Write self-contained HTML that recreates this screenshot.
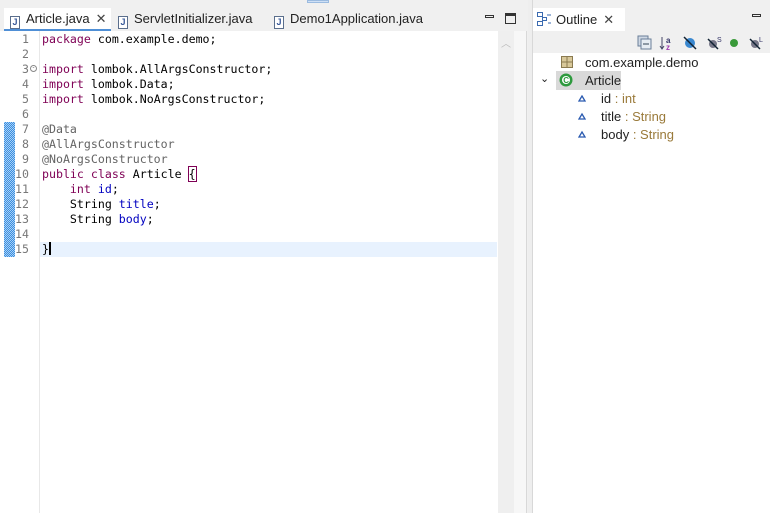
<!DOCTYPE html>
<html><head><meta charset="utf-8"><style>
*{margin:0;padding:0;box-sizing:border-box}
body{width:770px;height:513px;overflow:hidden;background:#f0f0f0;font-family:"Liberation Sans",sans-serif;position:relative}
.abs{position:absolute}
.tab{position:absolute;top:8px;height:23px;font-size:13px;color:#222;line-height:22px;white-space:nowrap}
.jic{display:inline-block;width:10px;height:13px;border:1px solid #5a6e8c;background:#fff;vertical-align:-2px;margin-right:6px;font:bold 9px "Liberation Sans";color:#3a5a9a;text-align:center;line-height:11px}
.code{position:absolute;left:0;top:31px;width:498px;height:482px;background:#fff}
.ln{position:absolute;left:6px;width:23px;font:11.6px "DejaVu Sans Mono",monospace;color:#787878;line-height:15px}
.cl{position:absolute;left:42px;font:11.6px "DejaVu Sans Mono",monospace;color:#000;white-space:pre;line-height:15px}
.k{color:#7f0055}.a{color:#646464}.f{color:#0000c0}
.ot{position:absolute;font-size:13px;color:#222;white-space:nowrap}
.ty{color:#9a7a3a}
.x{font-size:13px;color:#444;margin-left:6px}
</style></head><body>
<div class="abs" style="left:307px;top:0;width:22px;height:3px;background:#cfe0f5;border:1px solid #9bbbe0"></div>
<div class="abs" style="left:0;top:8px;width:528px;height:23px;background:#f0f0f0"></div>
<div class="abs" style="left:4px;top:8px;width:107px;height:23px;background:#fff"></div>
<div class="abs" style="left:4px;top:29px;width:107px;height:2px;background:#4f8fd6"></div>
<div class="tab" style="left:10px"><span class="jic">J</span>Article.java<span class="x">✕</span></div>
<div class="tab" style="left:118px"><span class="jic">J</span>ServletInitializer.java</div>
<div class="tab" style="left:274px"><span class="jic">J</span>Demo1Application.java</div>
<div class="abs" style="left:485px;top:15px;width:9px;height:3px;border:1px solid #333"></div>
<div class="abs" style="left:505px;top:13px;width:11px;height:11px;border:1px solid #333;border-top-width:3px"></div>
<div class="code">
<div class="abs" style="left:4px;top:91px;width:11px;height:135px;background:repeating-conic-gradient(#3a8ee0 0 25%,#a8d0f5 0 50%) 0 0/2px 2px"></div>
<div class="abs" style="left:39px;top:0;width:1px;height:482px;background:#e8e8e8"></div>
<div class="abs" style="left:40px;top:211px;width:457px;height:15px;background:#e8f2fe"></div>
<div class="abs" style="left:498px;top:0;width:16px;height:482px;background:#efefef"></div>
<div class="abs" style="left:501px;top:4px;font-size:10px;color:#bbb">︿</div>
</div>
<div class="abs" style="left:514px;top:31px;width:13px;height:482px;background:#f7f7f7;border-right:1px solid #d8d8d8"></div>
<div class="abs" style="left:528px;top:0;width:5px;height:513px;background:#eee;border-right:1px solid #d8d8d8"></div>
<div class="abs" style="left:533px;top:8px;width:237px;height:23px;background:#f0f0f0"></div>
<div class="abs" style="left:533px;top:8px;width:92px;height:23px;background:#fff"></div>
<svg class="abs" style="left:537px;top:12px" width="14" height="14"><g fill="none" stroke="#3a6ab0"><rect x=".5" y=".5" width="5" height="4"/><rect x="5.5" y="5.5" width="4" height="3"/><rect x=".5" y="9.5" width="5" height="4"/></g><path d="M10 3h4M11 11h3" stroke="#3a6ab0"/></svg>
<div class="ot" style="left:556px;top:12px">Outline<span class="x">✕</span></div>
<div class="abs" style="left:752px;top:14px;width:9px;height:3px;border:1px solid #333"></div>
<div class="abs" style="left:533px;top:31px;width:237px;height:22px;background:#f0f0f0"></div>
<svg class="abs" style="left:637px;top:35px" width="130" height="16">
<rect x="1" y="1" width="10" height="10" fill="#cfd8e4" stroke="#6a7e98"/><rect x="4" y="4" width="10" height="10" fill="#e6ecf3" stroke="#6a7e98"/><path d="M6 9h6" stroke="#345"/>
<path d="M25 2v12M23 11l2 3 2-3" stroke="#446" fill="none"/><text x="29" y="8" font-size="8" font-weight="bold" fill="#336" font-family="Liberation Sans">a</text><text x="29" y="15" font-size="8" font-weight="bold" fill="#a03ab0" font-family="Liberation Sans">z</text>
<circle cx="53" cy="8" r="5" fill="#3a88d0"/><path d="M47 2l12 12" stroke="#123" stroke-width="1.5"/>
<circle cx="76" cy="9" r="4" fill="#778"/><path d="M71 4l10 10" stroke="#123" stroke-width="1.5"/><text x="80" y="7" font-size="7" fill="#336">S</text>
<circle cx="97" cy="8" r="4" fill="#3a9a3a"/>
<circle cx="118" cy="9" r="4" fill="#778"/><path d="M113 4l10 10" stroke="#123" stroke-width="1.5"/><text x="122" y="7" font-size="7" fill="#336">L</text>
</svg>
<div class="abs" style="left:533px;top:53px;width:237px;height:460px;background:#fff"></div>
<svg class="abs" style="left:561px;top:56px" width="12" height="12"><rect x=".5" y=".5" width="11" height="11" fill="#d8c89a" stroke="#8a7a50"/><path d="M6 0v12M0 6h12" stroke="#8a7a50"/></svg>
<div class="ot" style="left:585px;top:55px">com.example.demo</div>
<div class="abs" style="left:556px;top:71px;width:65px;height:19px;background:#d9d9d9"></div>
<div class="ot" style="left:540px;top:72px;font-size:11px">⌄</div>
<svg class="abs" style="left:559px;top:73px" width="14" height="14"><circle cx="7" cy="7" r="6.5" fill="#2e9a3e"/><circle cx="7" cy="7" r="4" fill="#fff"/><text x="4.2" y="10" font-size="8" font-weight="bold" fill="#2e9a3e" font-family="Liberation Sans">C</text></svg>
<div class="ot" style="left:585px;top:73px">Article</div>
<div class="ot" style="left:601px;top:91px">id<span class="ty"> : int</span></div>
<div class="ot" style="left:601px;top:109px">title<span class="ty"> : String</span></div>
<div class="ot" style="left:601px;top:127px">body<span class="ty"> : String</span></div>
<svg class="abs" style="left:578px;top:95px" width="8" height="44"><g fill="#fff" stroke="#2a5ab0" stroke-width="1.3"><path d="M4 1L7 6H1Z"/><path d="M4 19L7 24H1Z"/><path d="M4 37L7 42H1Z"/></g></svg>
<div class="ln" style="top:32px;text-align:right">1<br>2<br>3<br>4<br>5<br>6<br>7<br>8<br>9<br>10<br>11<br>12<br>13<br>14<br>15</div>
<div class="abs" style="left:30px;top:65px;width:7px;height:7px;border:1px solid #888;border-radius:50%;font-size:6px;line-height:5px;text-align:center;color:#555;background:#fff">-</div>
<div class="cl" style="top:32px"><span class="k">package</span> com.example.demo;

<span class="k">import</span> lombok.AllArgsConstructor;
<span class="k">import</span> lombok.Data;
<span class="k">import</span> lombok.NoArgsConstructor;

<span class="a">@Data</span>
<span class="a">@AllArgsConstructor</span>
<span class="a">@NoArgsConstructor</span>
<span class="k">public</span> <span class="k">class</span> Article <span style="outline:1px solid #7f0055">{</span>
    <span class="k">int</span> <span class="f">id</span>;
    String <span class="f">title</span>;
    String <span class="f">body</span>;

}<span style="display:inline-block;width:2px;height:13px;background:#000;vertical-align:-2px"></span></div>
</body></html>
